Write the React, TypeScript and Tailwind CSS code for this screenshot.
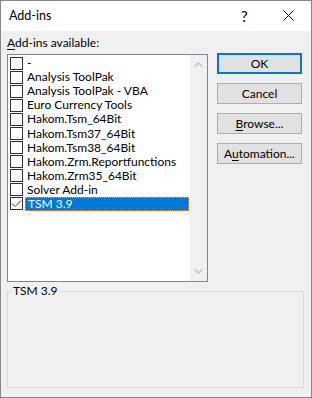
import React from "react";

const items = [
  "-",
  "Analysis ToolPak",
  "Analysis ToolPak - VBA",
  "Euro Currency Tools",
  "Hakom.Tsm_64Bit",
  "Hakom.Tsm37_64Bit",
  "Hakom.Tsm38_64Bit",
  "Hakom.Zrm.Reportfunctions",
  "Hakom.Zrm35_64Bit",
  "Solver Add-in",
  "TSM 3.9",
];

const Check = () => (
  <svg width="11" height="11" viewBox="0 0 11 11">
    <path d="M1 5.5 L4 8.5 L10 2.5" fill="none" stroke="#333" strokeWidth="1" />
  </svg>
);

const Button = ({ children, primary }: { children: React.ReactNode; primary?: boolean }) => (
  <div
    className={
      "h-[21px] w-[85px] flex items-center justify-center bg-[#e1e1e1] text-black leading-[14px] " +
      (primary ? "border-2 border-[#0078d7]" : "border border-[#adadad]")
    }
  >
    {children}
  </div>
);

export default function App() {
  return (
    <div
      className="w-[312px] h-[398px] border border-[#888888] bg-[#f0f0f0] flex flex-col text-[12px] text-black"
      style={{ fontFamily: 'Lato, "Noto Sans", sans-serif' }}
    >
      {/* title bar */}
      <div className="h-[30px] bg-white flex items-center pl-[8px] relative">
        <span className="text-[12.5px]">Add-ins</span>
        <span className="absolute left-[240px] top-[5px] text-[15px] leading-[20px]">?</span>
        <svg className="absolute left-[282px] top-[9px]" width="11" height="11" viewBox="0 0 11 11">
          <path d="M0.5 0.5 L10.5 10.5 M10.5 0.5 L0.5 10.5" stroke="#000" strokeWidth="1" />
        </svg>
      </div>

      <div className="flex pl-[6px]">
        {/* left column */}
        <div className="w-[201px]">
          <div className="h-[23px] pt-[5px] leading-[14px]">
            <span className="underline underline-offset-2">A</span>dd-ins available:
          </div>
          <div className="h-[228px] border border-[#828790] bg-white flex">
            <div className="flex-1 pt-[1px] pl-[2px]">
              {items.map((it, i) => {
                const sel = i === items.length - 1;
                return (
                  <div key={it} className="h-[14.1px] flex items-center">
                    <div className="w-[13px] h-[13px] border border-[#333333] bg-white flex items-center justify-center shrink-0">
                      {sel && <Check />}
                    </div>
                    <div
                      className={
                        "ml-[2px] h-[14px] pl-[2px] flex items-center leading-[12px] " +
                        (sel
                          ? "flex-1 mr-[1px] bg-[#0078d7] text-white border border-dotted border-[#f0a050]"
                          : "")
                      }
                    >
                      {it}
                    </div>
                  </div>
                );
              })}
            </div>
            <div className="w-[17px] bg-[#f0f0f0] flex flex-col justify-between items-center py-[7px]">
              <svg width="9" height="6" viewBox="0 0 9 6">
                <path d="M0.5 5 L4.5 1 L8.5 5" fill="none" stroke="#c2c2c2" strokeWidth="1.5" />
              </svg>
              <svg width="9" height="6" viewBox="0 0 9 6">
                <path d="M0.5 1 L4.5 5 L8.5 1" fill="none" stroke="#c2c2c2" strokeWidth="1.5" />
              </svg>
            </div>
          </div>
        </div>

        {/* right column */}
        <div className="ml-[9px] pt-[22px] flex flex-col gap-[9px]">
          <Button primary>OK</Button>
          <Button>Cancel</Button>
          <Button>
            <span>
              <span className="underline underline-offset-2">B</span>rowse...
            </span>
          </Button>
          <Button>
            <span>
              A<span className="underline underline-offset-2">u</span>tomation...
            </span>
          </Button>
        </div>
      </div>

      {/* description group */}
      <div className="ml-[6px] mt-[9px] w-[297px] h-[97px] border border-[#dcdcdc] relative">
        <span className="absolute left-[5px] top-[-8px] bg-[#f0f0f0] pr-[1px] leading-[14px]">TSM 3.9</span>
      </div>
    </div>
  );
}
